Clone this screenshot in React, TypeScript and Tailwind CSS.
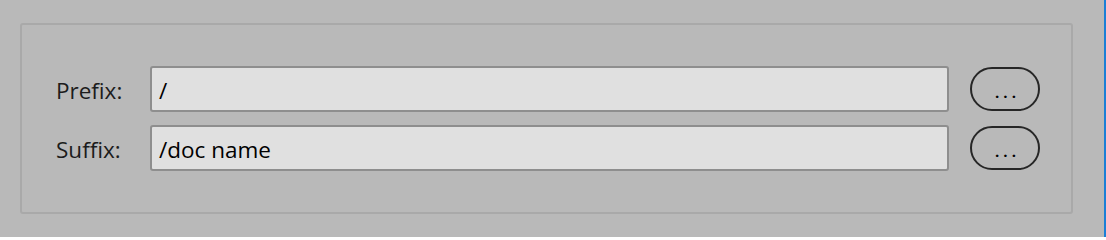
const rows = [
  { label: "Prefix:", value: "/" },
  { label: "Suffix:", value: "/doc name" },
];

const App = () => {
  return (
    <div
      className="w-[1106px] h-[237px] bg-[#b9b9b9] border-r-2 border-[#1b7fd6] pt-[23px] pl-[20px]"
      style={{ fontFamily: '"Open Sans", "Noto Sans", sans-serif' }}
    >
      <div className="w-[1053px] h-[191px] rounded-[3px] border-2 border-[#a9a9a9] flex flex-col justify-center gap-[13px] pl-[34px]">
        {rows.map((row) => (
          <div key={row.label} className="flex items-center">
            <span className="w-[94px] text-[22.5px] leading-none text-[#1c1c1c] pt-[5px]">
              {row.label}
            </span>
            <div className="w-[799px] h-[46px] rounded-[3px] border-2 border-[#8e8e8e] bg-[#e0e0e0] flex items-center pl-[7px] pt-[4px] text-[22.5px] leading-none text-black">
              {row.value}
            </div>
            <button className="ml-[21px] w-[70px] h-[44px] rounded-full border-2 border-[#262626] flex items-end justify-center pb-[9px] pl-[5px] text-[15px] leading-none tracking-[4px] text-black font-bold">
              ...
            </button>
          </div>
        ))}
      </div>
    </div>
  );
};

export default App;
